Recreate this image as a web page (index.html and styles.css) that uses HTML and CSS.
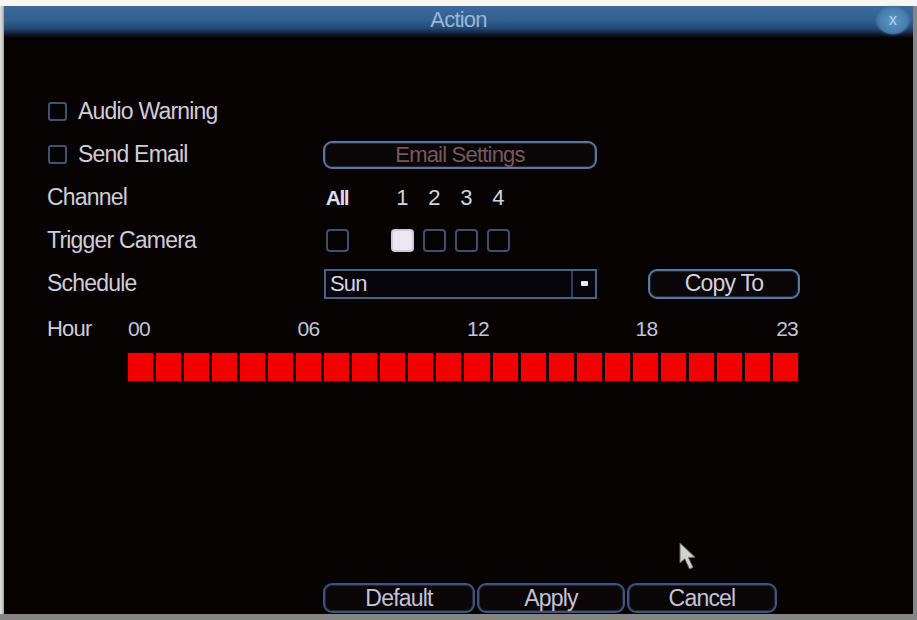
FILE: index.html
```html
<!DOCTYPE html>
<html>
<head>
<meta charset="utf-8">
<link rel="stylesheet" href="styles.css">
</head>
<body>
<div class="top-strip"></div>
<div class="screen">
  <div class="edge-left"></div>
  <div class="window">
    <div class="titlebar">
      <span></span>
      <span class="title">Action</span>
      <span class="close">x</span>
    </div>
    <div class="content">
      <div class="rows">
        <label class="label check-label"><span class="box"></span>Audio Warning</label>
        <div></div>

        <label class="label check-label"><span class="box"></span>Send Email</label>
        <div><span class="btn btn-email">Email Settings</span></div>

        <div class="label">Channel</div>
        <div class="chan">
          <span class="cell-all">All</span>
          <span class="cells"><span class="num">1</span><span class="num">2</span><span class="num">3</span><span class="num">4</span></span>
        </div>

        <div class="label">Trigger Camera</div>
        <div class="chan">
          <span class="cell-all"><span class="cbox"></span></span>
          <span class="cells">
            <span class="num"><span class="cbox on"></span></span>
            <span class="num"><span class="cbox"></span></span>
            <span class="num"><span class="cbox"></span></span>
            <span class="num"><span class="cbox"></span></span>
          </span>
        </div>

        <div class="label">Schedule</div>
        <div class="sched">
          <span class="select"><span class="select-text">Sun</span><span class="select-arrow"><span class="dot"></span></span></span>
          <span class="btn btn-copy">Copy To</span>
        </div>
      </div>

      <div class="hours">
        <span class="label hour-label">Hour</span>
        <div class="hour-grid">
          <span class="h h0">00</span>
          <span class="h h6">06</span>
          <span class="h h12">12</span>
          <span class="h h18">18</span>
          <span class="h h23">23</span>
        </div>
      </div>
      <div class="bar">
        <span></span><span></span><span></span><span></span><span></span><span></span>
        <span></span><span></span><span></span><span></span><span></span><span></span>
        <span></span><span></span><span></span><span></span><span></span><span></span>
        <span></span><span></span><span></span><span></span><span></span><span></span>
      </div>
    </div>
    <div class="footer">
      <span class="btn btn-foot b1">Default</span>
      <span class="btn btn-foot b2">Apply</span>
      <span class="btn btn-foot b3">Cancel</span>
    </div>
    <svg class="cursor" width="22" height="30" viewBox="0 0 22 30">
      <path d="M2 1 L2 21 L6.8 16.8 L11.5 27 L15 25.4 L10.4 15.6 L17 15.2 Z" fill="#d2d2d2" stroke="#6a6a6a" stroke-width="1"/>
    </svg>
  </div>
</div>
</body>
</html>
```

FILE: styles.css
```css
* { box-sizing: border-box; }

body {
  margin: 0;
  width: 917px;
  height: 620px;
  overflow: hidden;
  background: #858585;
  font-family: "Liberation Sans", Arial, sans-serif;
  font-size: 23px;
  letter-spacing: -0.8px;
  color: #d6d2de;
}

.top-strip {
  height: 6px;
  background: #f6f6f6;
}

.screen {
  display: flex;
  height: 608px;
}

.edge-left {
  width: 4px;
  background: linear-gradient(90deg, #e4e4e4, #bdbdbd 70%, #9a9a9a);
}

.window {
  position: relative;
  width: 909px;
  height: 608px;
  background: #070303;
  display: flex;
  flex-direction: column;
}

.titlebar {
  height: 32px;
  display: grid;
  grid-template-columns: 1fr auto 1fr;
  align-items: center;
  background: linear-gradient(180deg, #3b6a9c 0%, #30608f 45%, #244875 70%, #111b30 88%, #070303 100%);
}

.title {
  color: #9cb6d6;
  font-size: 22px;
  padding-bottom: 4px;
}

.close {
  justify-self: end;
  margin-right: 4px;
  margin-bottom: 4px;
  width: 32px;
  height: 27px;
  border-radius: 50%;
  background: radial-gradient(ellipse at center, #6198c4 0%, #4a7fae 55%, #35679a 100%);
  box-shadow: 0 0 3px #4f86b6;
  color: #a8d6f0;
  font-size: 16px;
  line-height: 25px;
  text-align: center;
  letter-spacing: 0;
}

.content {
  padding: 52px 0 0 43px;
}

.rows {
  display: grid;
  grid-template-columns: 276px auto;
  grid-auto-rows: 43px;
  align-items: center;
}

.label {
  color: #d0ccd8;
  white-space: nowrap;
}

.check-label {
  display: flex;
  align-items: center;
  gap: 11px;
  margin-left: 1px;
}

.box {
  width: 19px;
  height: 19px;
  border: 2px solid #3f5272;
  border-radius: 3px;
}

.btn {
  display: inline-flex;
  align-items: center;
  justify-content: center;
  border: 2px solid #5c7898;
  border-radius: 9px;
  box-shadow: inset 0 0 0 1px #1b2740;
  background: #0b0608;
  color: #d4d0dc;
}

.btn-email {
  width: 274px;
  height: 28px;
  color: #76595e;
  font-size: 22px;
}

.chan {
  display: flex;
  align-items: center;
  padding-left: 1px;
}

.cell-all {
  width: 26px;
  display: flex;
  justify-content: center;
  font-size: 21px;
  font-weight: bold;
  letter-spacing: -1.5px;
  color: #dedbe4;
}

.cells {
  display: flex;
  margin-left: 36px;
}

.num {
  width: 32px;
  display: flex;
  justify-content: center;
  font-size: 22px;
}

.cbox {
  width: 23px;
  height: 23px;
  border: 2px solid #3c5070;
  border-radius: 4px;
}

.cbox.on {
  background: #ece8f0;
  border-color: #cfcbd6;
}

.sched {
  display: flex;
  align-items: center;
  gap: 51px;
  padding-left: 1px;
}

.select {
  width: 273px;
  height: 30px;
  border: 2px solid #4a6282;
  display: flex;
  align-items: center;
  background: #06040a;
}

.select-text {
  flex: 1;
  padding-left: 4px;
  color: #d6d2de;
  font-size: 22px;
}

.select-arrow {
  width: 24px;
  height: 100%;
  border-left: 2px solid #2f3e5c;
  display: flex;
  align-items: center;
  justify-content: center;
}

.dot {
  width: 7px;
  height: 5px;
  background: #e8e8ee;
  border-radius: 1px;
}

.btn-copy {
  width: 152px;
  height: 30px;
}

.hours {
  display: flex;
  align-items: center;
  height: 48px;
}

.hour-label {
  width: 81px;
  font-size: 22px;
}

.hour-grid {
  width: 670px;
  display: grid;
  grid-template-columns: repeat(24, 1fr);
  font-size: 21px;
  color: #c6c4d4;
}

.h0 { grid-column: 1; }
.h6 { grid-column: 7; margin-left: 2px; }
.h12 { grid-column: 13; margin-left: 4px; }
.h18 { grid-column: 19; margin-left: 5px; }
.h23 { grid-column: 24; justify-self: end; }

.bar {
  margin-left: 81px;
  width: 670px;
  height: 28px;
  display: grid;
  grid-template-columns: repeat(24, 1fr);
  gap: 3px;
}

.bar span {
  background: #f20000;
  box-shadow: 0 0 1px #c00;
}

.footer {
  margin-top: auto;
  padding: 0 0 1px 319px;
  display: flex;
  gap: 2px;
}

.btn-foot {
  height: 30px;
  border-color: #3f5478;
  color: #c4c2d4;
}

.b1 { width: 152px; }
.b2 { width: 148px; }
.b3 { width: 150px; }

.cursor {
  position: absolute;
  left: 674px;
  top: 536px;
}
```
